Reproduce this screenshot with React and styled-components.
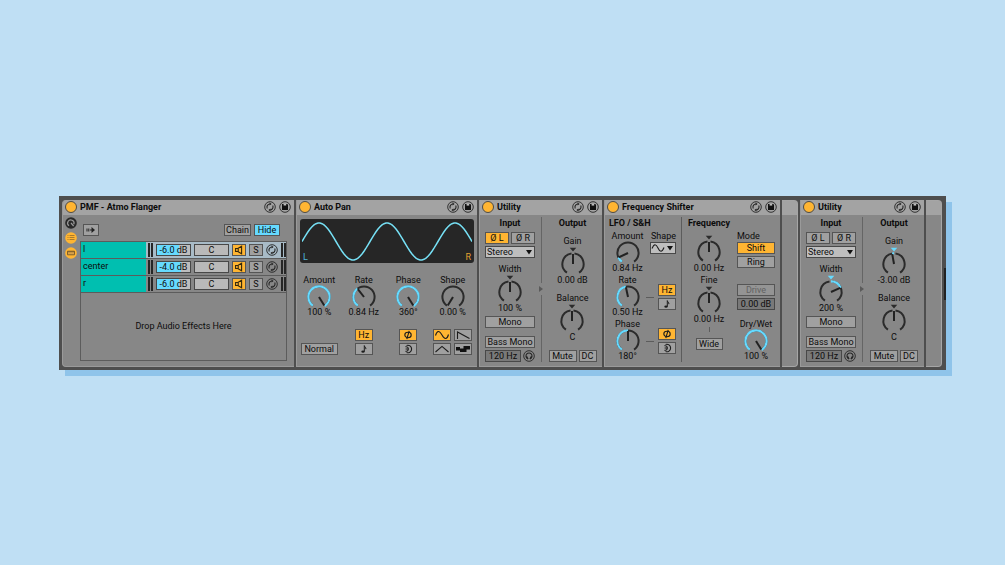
import styled, { createGlobalStyle, css } from "styled-components";

const color = {
    page: '#bfdff4',
    shadow: '#8fc4ea',
    frame: '#4e4e4e',
    title: '#a3a3a3',
    body: '#878787',
    button: '#a0a0a0',
    field: '#797979',
    line: '#5c5c5c',
    ink: '#0c0c0c',
    orange: '#ffb532',
    blue: '#66daff',
    teal: '#00bfb0',
    display: '#262626',
}

const GlobalStyle = createGlobalStyle`
    * { box-sizing: border-box; }
    body {
        margin: 0;
        background: ${color.page};
    }
    body, button, input, select {
        font-family: Roboto, "Liberation Sans", sans-serif;
        font-size: 9px;
        font-weight: 400;
        line-height: 12px;
        color: ${color.ink};
    }
`

const Page = styled.main`
    min-height: 100vh;
    padding: 0 59px;
    display: flex;
    align-items: center;
`
const Rack = styled.div`
    position: relative;
    flex: 1;
    display: grid;
    grid-template-columns:
        minmax(0, 232fr) minmax(0, 181fr) minmax(0, 123fr) minmax(0, 176fr)
        minmax(0, 16fr) minmax(0, 124fr) minmax(0, 16fr);
    gap: 2px;
    padding: 4px 4px 3px 3px;
    background: ${color.frame};
    box-shadow: 6px 6px 0 ${color.shadow};
    &::after {
        content: '';
        position: absolute;
        right: 0;
        top: 72px;
        width: 2px;
        height: 32px;
        background: #222;
    }
`

// device shell
const DeviceBox = styled.section`
    display: flex;
    flex-direction: column;
    background: ${color.body};
    border: 1px solid #9a9a9a;
    border-top: 0;
    border-right: 0;
    border-radius: ${props => props.$first ? '4px 0 0 4px' : '0'};
    overflow: hidden;
`
const TitleBar = styled.header`
    display: flex;
    align-items: center;
    gap: 3px;
    height: 15px;
    padding: 0 3px 0 2px;
    background: ${color.title};
    h2 {
        flex-grow: 1;
        margin: 0;
        font-size: 9px;
        line-height: 12px;
        font-weight: 700;
        white-space: nowrap;
    }
`
const RackEnd = styled.div`
    border: 1px solid #a6a6a6;
    border-left: 0;
    border-radius: 0 4px 4px 0;
    background: linear-gradient(${color.title} 14px, ${color.body} 14px);
`
const Round = styled.button`
    flex: none;
    width: 12px;
    height: 12px;
    padding: 0;
    border: 0;
    border-radius: 50%;
    background: none;
    svg { display: block; }
`
const Power = styled(Round)`
    border: 1px solid #4a4a4a;
    background: ${color.orange};
`

// shared controls
const Button = styled.button`
    display: flex;
    align-items: center;
    justify-content: center;
    width: ${props => props.$width ? props.$width + 'px' : 'auto'};
    height: 12px;
    padding: 0;
    border: 1px solid #555;
    border-radius: 0;
    background: ${color.button};
    line-height: 10px;
    white-space: nowrap;
    ${props => props.$on && css`background: ${color.orange};`}
    ${props => props.$blue && css`background: ${color.blue};`}
    &:disabled {
        color: #626262;
        background: #949494;
    }
`
const Field = styled.input`
    width: ${props => props.$width ? props.$width + 'px' : '100%'};
    min-width: 0;
    height: 12px;
    padding: 0;
    border: 1px solid #484848;
    border-radius: 0;
    text-align: center;
    line-height: 10px;
    background: ${color.field};
    ${props => props.$fill && css`
        background: linear-gradient(90deg, ${color.blue} ${props.$fill}%, #bdbdbd ${props.$fill}%);
    `}
    ${props => props.$light && css`background: #b9b9b9;`}
`
const SelectBox = styled.div`
    position: relative;
    width: ${props => props.$width}px;
    height: 12px;
    select {
        display: block;
        appearance: none;
        width: 100%;
        height: 12px;
        padding: 0 0 0 1px;
        border: 1px solid #484848;
        border-radius: 0;
        background: #bebebe;
        line-height: 10px;
        color: ${props => props.$drawn ? 'transparent' : color.ink};
    }
    svg {
        position: absolute;
        top: 0;
        right: 2px;
        pointer-events: none;
    }
`
const Heading = styled.h3`
    margin: 0;
    font-size: 9px;
    line-height: 12px;
    font-weight: 700;
    white-space: nowrap;
`
const Text = styled.span`
    line-height: 12px;
    white-space: nowrap;
`
const Row = styled.div`
    display: flex;
    align-items: center;
    gap: ${props => props.$gap || 0}px;
`
const KnobLabel = styled.label`
    position: relative;
    display: flex;
    flex-direction: column;
    align-items: center;
    white-space: nowrap;
    svg {
        display: block;
        overflow: visible;
    }
    input {
        position: absolute;
        inset: 12px 0;
        width: 100%;
        margin: 0;
        opacity: 0;
    }
`

const at = (deg, r) => {
    const a = deg * Math.PI / 180
    return `${(13 + r * Math.sin(a)).toFixed(2)} ${(-r * Math.cos(a)).toFixed(2)}`
}
const arc = (from, to, r) =>
    `M${at(from, r)}A${r} ${r} 0 ${to - from > 180 ? 1 : 0} 1 ${at(to, r)}`

// angle 0 points up, the travel is -145 to 145
const Knob = ({ label, name, value, angle, from, marker, markerOn }) => {
    const height = marker ? 27 : 20
    const cy = marker ? 17 : 11
    const lit = from !== undefined && from !== angle
    const lo = lit ? Math.min(from, angle) : 0
    const hi = lit ? Math.max(from, angle) : 0
    return (
        <KnobLabel>
            {label && <span>{label}</span>}
            <svg width="26" height={height} viewBox={`0 ${-cy} 26 ${height}`} fill="none" strokeWidth="2">
                {marker && <path d="M9.700 -16.2h6.600l-3.300 3.6z" fill={markerOn ? color.blue : '#2b2b2b'} />}
                <path d={marker ? arc(-145, -8, 10.6) + arc(8, 145, 10.6) : arc(-145, 145, 10.6)} stroke="#2b2b2b" />
                {lit && <path d={arc(lo, hi, 10.6)} stroke={color.blue} strokeWidth="2.2" />}
                <path d={`M13 0L${at(angle, 10)}`} stroke="#222" strokeWidth="2" />
            </svg>
            <span>{value}</span>
            <input type="range" min="-145" max="145" defaultValue={angle} aria-label={name || label} />
        </KnobLabel>
    )
}

// icons
const SwapIcon = () => (
    <svg width="12" height="12" viewBox="0 0 12 12" fill="none" stroke="#262626">
        <circle cx="6" cy="6" r="5.3" strokeWidth=".9" />
        <path d="M3.3 7.4A3 3 0 0 1 6.2 3M8.7 4.6A3 3 0 0 1 5.8 9" strokeWidth="1.1" />
        <path d="M5.6 1.6L7.6 3.1 5.6 4.6zM6.4 7.4L4.4 8.9 6.4 10.4z" fill="#262626" stroke="none" />
    </svg>
)
const SaveIcon = () => (
    <svg width="12" height="12" viewBox="0 0 12 12">
        <circle cx="6" cy="6" r="5.3" fill="none" stroke="#262626" strokeWidth=".9" />
        <path d="M3 3h5.2L9 3.8V9H3z" fill="#111" />
        <path d="M4.6 3h2.6v1.6H4.6z" fill="#bbb" />
    </svg>
)
const PhaseIcon = () => (
    <svg width="12" height="10" viewBox="0 0 12 10" fill="none" stroke="#1c1c1c" strokeWidth="1.1">
        <ellipse cx="6" cy="5" rx="3.2" ry="2.7" />
        <path d="M7.2 .8L4.8 9.2" />
    </svg>
)
const SpinIcon = () => (
    <svg width="12" height="10" viewBox="0 0 12 10" fill="none" stroke="#1c1c1c" strokeWidth="1.1">
        <path d="M4.6 1.4A3.800 3.800 0 1 1 4.6 8.6" />
        <path d="M3.4 2.800a2.300 2.300 0 1 1 0 4.400M3.600 5h2.400" />
    </svg>
)
const NoteIcon = () => (
    <svg width="8" height="10" viewBox="0 0 8 10" fill="none">
        <ellipse cx="3" cy="7.6" rx="1.7" ry="1.2" fill="#1c1c1c" />
        <path d="M4.3 7.6V1.6c.3 1.6 2 1.6 1.5 3.6" stroke="#1c1c1c" />
    </svg>
)
const waves = {
    sine: 'M1.5 5.5C3 .2 5.4 .2 8 5S13 9.8 14.5 4.5',
    saw: 'M2.5 9V2L14.5 8.4',
    triangle: 'M1.5 8L8 2.4 14.5 8',
}
const WaveIcon = ({ shape }) => (
    <svg width="16" height="10" viewBox="0 0 16 10" fill="none" stroke="#1c1c1c" strokeWidth="1.1">
        {shape === 'random'
            ? <path d="M1 3h4v1.500h3.500V2H15v3.500h-3.500V8H5V6.500H1z" fill="#111" stroke="none" />
            : <path d={waves[shape]} />}
    </svg>
)
const HeadphoneIcon = () => (
    <svg width="12" height="12" viewBox="0 0 12 12" fill="none" stroke="#262626">
        <circle cx="6" cy="6" r="5.3" strokeWidth=".9" />
        <path d="M4.2 8.4A3 3 0 1 1 7.8 8.4" strokeWidth="1.1" />
        <path d="M3.4 6.4l1.5 2.8M8.6 6.4L7.1 9.2" strokeWidth="1.5" />
    </svg>
)
const SpeakerIcon = () => (
    <svg width="10" height="10" viewBox="0 0 10 10" fill="none" stroke="#33260a" strokeWidth="1.1">
        <path d="M1.6 3.5h2.2L7.6 1.2v7.6L3.8 6.5H1.6zM4.2 3.5v3" />
    </svg>
)
const DownArrow = () => (
    <svg width="8" height="12" viewBox="0 0 8 12"><path d="M1 4h6L4 8.5z" fill="#111" /></svg>
)

const Device = ({ name, first, children }) => (
    <DeviceBox $first={first}>
        <TitleBar>
            <Power aria-label={`${name} on`} />
            <h2>{name}</h2>
            <Round aria-label="Hot swap"><SwapIcon /></Round>
            <Round aria-label="Save preset"><SaveIcon /></Round>
        </TitleBar>
        {children}
    </DeviceBox>
)

// chain rack
const ChainBody = styled.div`
    flex: 1;
    display: grid;
    grid-template-columns: 12px minmax(0, 1fr);
    gap: 3px;
    padding: 2px 7px 5px 2px;
`
const SideTabs = styled.div`
    display: flex;
    flex-direction: column;
    gap: 3px;
`
const ChainArea = styled.div`
    display: flex;
    flex-direction: column;
`
const ChainTools = styled.div`
    display: flex;
    gap: 3px;
    padding: 7px 7px 5px 3px;
    button:first-child { margin-right: auto; }
`
const ChainList = styled.div`
    flex: 1;
    display: flex;
    flex-direction: column;
    border: 1px solid ${color.line};
`
const ChainRow = styled.div`
    display: grid;
    grid-template-columns: minmax(0, 1fr) 5px 35px 35px 14px 14px 12px 5px;
    column-gap: 3px;
    align-items: center;
    height: 17px;
    border-bottom: 1px solid ${color.line};
    background: ${props => props.$selected ? '#a8bbc7' : color.body};
    > span:first-child {
        height: 16px;
        margin-right: -1px;
        padding-left: 2px;
        line-height: 15px;
        background: ${color.teal};
    }
`
const Meter = styled.span`
    height: 14px;
    border: solid #262626;
    border-width: 0 2px;
`
const DropZone = styled.div`
    flex: 1;
    display: flex;
    align-items: center;
    justify-content: center;
`

const chains = [
    { name: 'l', volume: '-6.0 dB', fill: 68, selected: true },
    { name: 'center', volume: '-4.0 dB', fill: 72 },
    { name: 'r', volume: '-6.0 dB', fill: 68 },
]

const ChainRack = () => (
    <Device name="PMF - Atmo Flanger" first>
        <ChainBody>
            <SideTabs>
                <Round aria-label="Macros">
                    <svg width="12" height="12" viewBox="0 0 12 12" fill="none">
                        <circle cx="6" cy="6" r="5.8" fill="#292929" />
                        <path d="M4 8.8A3.2 3.2 0 1 1 8.8 7.3M6 6l2.6 3" stroke="#999" strokeWidth="1.2" />
                    </svg>
                </Round>
                <Round aria-label="Chain list">
                    <svg width="12" height="12" viewBox="0 0 12 12">
                        <circle cx="6" cy="6" r="5.8" fill={color.orange} />
                        <path d="M2.5 3.5h1M4.5 3.5h5M2.5 5.5h1M4.5 5.5h5M2.5 7.5h1M4.5 7.5h5" stroke="#a97b2b" />
                    </svg>
                </Round>
                <Round aria-label="Devices">
                    <svg width="12" height="12" viewBox="0 0 12 12">
                        <circle cx="6" cy="6" r="5.8" fill={color.orange} />
                        <path d="M2.5 4.2h7v3.6h-7z" fill="#d8a24a" stroke="#80612b" />
                        <path d="M2.5 4.7h7" stroke="#80612b" />
                    </svg>
                </Round>
            </SideTabs>
            <ChainArea>
                <ChainTools>
                    <Button $width={16} aria-label="Auto select">
                        <svg width="10" height="8" viewBox="0 0 10 8">
                            <path d="M1 2.5v3M2.8 2.5v3M4 4h2" stroke="#222" />
                            <path d="M5.5 1L9 4 5.5 7z" fill="#222" />
                        </svg>
                    </Button>
                    <Button $width={27}>Chain</Button>
                    <Button $width={26} $blue>Hide</Button>
                </ChainTools>
                <ChainList>
                    {chains.map(chain => (
                        <ChainRow key={chain.name} $selected={chain.selected}>
                            <span>{chain.name}</span>
                            <Meter />
                            <Field $fill={chain.fill} defaultValue={chain.volume} aria-label={`${chain.name} volume`} />
                            <Field $light defaultValue="C" aria-label={`${chain.name} pan`} />
                            <Button $on aria-label={`${chain.name} active`}><SpeakerIcon /></Button>
                            <Button>S</Button>
                            <Round aria-label="Hot swap"><SwapIcon /></Round>
                            <Meter />
                        </ChainRow>
                    ))}
                    <DropZone>Drop Audio Effects Here</DropZone>
                </ChainList>
            </ChainArea>
        </ChainBody>
    </Device>
)

// auto pan
const PanBody = styled.div`
    padding: 4px 3px 0 3px;
`
const Display = styled.div`
    position: relative;
    height: 44px;
    padding: 0 2px;
    border-radius: 3px;
    background: ${color.display};
    svg {
        display: block;
        width: 100%;
        height: 44px;
    }
`
const Channel = styled.span`
    position: absolute;
    bottom: 0;
    ${props => props.$right ? 'right: 3px;' : 'left: 3px;'}
    color: ${props => props.$right ? '#e0a030' : '#4fb4d8'};
`
const FourColumns = styled.div`
    display: grid;
    grid-template-columns: repeat(4, minmax(0, 1fr));
    justify-items: center;
    align-items: end;
    margin: ${props => props.$top}px -1px 0 -3px;
`
const Pair = styled.div`
    display: grid;
    grid-template-columns: repeat(${props => props.$columns || 1}, 18px);
    gap: 2px 3px;
`

const sine = () => {
    const points = []
    for (let x = 0; x <= 170; x += 2) {
        points.push(`${x} ${(22.5 - 18.5 * Math.sin(x / 170 * 5 * Math.PI)).toFixed(2)}`)
    }
    return 'M' + points.join('L')
}

const AutoPan = () => (
    <Device name="Auto Pan">
        <PanBody>
            <Display>
                <svg viewBox="0 0 170 44" preserveAspectRatio="none" fill="none">
                    <path d={sine()} stroke="#76e0f5" strokeWidth="1.5" />
                </svg>
                <Channel>L</Channel>
                <Channel $right>R</Channel>
            </Display>
            <FourColumns $top={11}>
                <Knob label="Amount" value="100 %" angle={148} from={-145} />
                <Knob label="Rate" value="0.84 Hz" angle={-38} from={-145} />
                <Knob label="Phase" value="360°" angle={148} from={-145} />
                <Knob label="Shape" value="0.00 %" angle={-148} />
            </FourColumns>
            <FourColumns $top={11}>
                <Button $width={37}>Normal</Button>
                <Pair>
                    <Button $on>Hz</Button>
                    <Button aria-label="Sync"><NoteIcon /></Button>
                </Pair>
                <Pair>
                    <Button $on aria-label="Phase"><PhaseIcon /></Button>
                    <Button aria-label="Spin"><SpinIcon /></Button>
                </Pair>
                <Pair $columns={2}>
                    <Button $on aria-label="Sine"><WaveIcon shape="sine" /></Button>
                    <Button aria-label="Saw"><WaveIcon shape="saw" /></Button>
                    <Button aria-label="Triangle"><WaveIcon shape="triangle" /></Button>
                    <Button aria-label="Random"><WaveIcon shape="random" /></Button>
                </Pair>
            </FourColumns>
        </PanBody>
    </Device>
)

// utility
const UtilityBody = styled.div`
    flex: 1;
    display: grid;
    grid-template-columns: 50px 4px minmax(0, 1fr);
    column-gap: 4px;
    padding: 2px 4px 4px 5px;
`
const Column = styled.div`
    display: flex;
    flex-direction: column;
    align-items: ${props => props.$align || 'center'};
`
const Space = styled.div`
    flex: none;
    height: ${props => props.$size}px;
`
const Divider = styled.div`
    display: flex;
    flex-direction: column;
    align-items: center;
    &::before, &::after {
        content: '';
        flex: 1;
        width: 1px;
        background: #656565;
    }
    svg { margin: 3px 0; }
`

const Utility = ({ leftInverted, width, widthAngle, gain, gainAngle }) => (
    <Device name="Utility">
        <UtilityBody>
            <Column>
                <Heading>Input</Heading>
                <Space $size={3} />
                <Row $gap={2}>
                    <Button $width={24} $on={leftInverted}>Ø L</Button>
                    <Button $width={24}>Ø R</Button>
                </Row>
                <Space $size={2} />
                <SelectBox $width={50}>
                    <select aria-label="Channel mode"><option>Stereo</option></select>
                    <DownArrow />
                </SelectBox>
                <Space $size={5} />
                <Knob label="Width" value={width} angle={widthAngle} from={0} marker markerOn={widthAngle !== 0} />
                <Space $size={2} />
                <Button $width={50}>Mono</Button>
                <Space $size={8} />
                <Button $width={50}>Bass Mono</Button>
                <Space $size={2} />
                <Row $gap={2}>
                    <Field $width={36} defaultValue="120 Hz" aria-label="Bass mono frequency" />
                    <Round aria-label="Audition"><HeadphoneIcon /></Round>
                </Row>
            </Column>
            <Divider>
                <svg width="4" height="6" viewBox="0 0 4 6"><path d="M0 0l4 3-4 3z" fill="#5a5a5a" /></svg>
            </Divider>
            <Column>
                <Heading>Output</Heading>
                <Space $size={6} />
                <Knob label="Gain" value={gain} angle={gainAngle} from={0} marker markerOn={gainAngle !== 0} />
                <Space $size={6} />
                <Knob label="Balance" value="C" angle={0} marker />
                <Space $size={7} />
                <Row $gap={2}>
                    <Button $width={28}>Mute</Button>
                    <Button $width={18}>DC</Button>
                </Row>
            </Column>
        </UtilityBody>
    </Device>
)

// frequency shifter
const ShifterBody = styled.div`
    flex: 1;
    display: grid;
    grid-template-columns: 69px 1px 48px minmax(0, 1fr);
    column-gap: 3px;
    padding: 2px 5px 4px 4px;
`
const LfoGrid = styled.div`
    display: grid;
    grid-template-columns: 37px 30px;
    margin-top: 1px;
`
const Linked = styled.div`
    display: flex;
    align-items: center;
    justify-content: flex-end;
    gap: 4px;
    padding-top: 3px;
    &::before {
        content: '';
        width: 9px;
        height: 1px;
        background: ${color.line};
    }
`
const VLine = styled.div`
    height: ${props => props.$height ? props.$height + 'px' : 'auto'};
    width: 1px;
    background: ${color.line};
`

const FrequencyShifter = () => (
    <Device name="Frequency Shifter">
        <ShifterBody>
            <Column $align="stretch">
                <Heading>LFO / S&amp;H</Heading>
                <LfoGrid>
                    <Knob label="Amount" value="0.84 Hz" angle={-115} from={-145} />
                    <Column $align="flex-end">
                        <Text>Shape</Text>
                        <SelectBox $width={26} $drawn>
                            <select aria-label="LFO shape"><option aria-label="Sine"></option></select>
                            <svg width="24" height="12" viewBox="0 0 24 12" fill="none">
                                <path d="M2 6.5C4 1.5 6 1.5 8 6s4 4.500 6-.5" stroke="#1c1c1c" strokeWidth="1.1" />
                                <path d="M17 4h6l-3 4.500z" fill="#111" />
                            </svg>
                        </SelectBox>
                    </Column>
                    <Knob label="Rate" value="0.50 Hz" angle={-12} from={-145} />
                    <Linked>
                        <Pair>
                            <Button $on>Hz</Button>
                            <Button aria-label="Sync"><NoteIcon /></Button>
                        </Pair>
                    </Linked>
                    <Knob label="Phase" value="180°" angle={0} from={-145} />
                    <Linked>
                        <Pair>
                            <Button $on aria-label="Phase"><PhaseIcon /></Button>
                            <Button aria-label="Spin"><SpinIcon /></Button>
                        </Pair>
                    </Linked>
                </LfoGrid>
            </Column>
            <VLine />
            <Column>
                <Heading>Frequency</Heading>
                <Space $size={6} />
                <Knob name="Frequency" value="0.00 Hz" angle={0} marker />
                <Knob label="Fine" value="0.00 Hz" angle={0} marker />
                <Space $size={2} />
                <VLine $height={5} />
                <Space $size={6} />
                <Button $width={27}>Wide</Button>
            </Column>
            <Column $align="flex-end">
                <Space $size={13} />
                <Column $align="stretch">
                    <Text>Mode</Text>
                    <Button $width={38} $on>Shift</Button>
                    <Space $size={2} />
                    <Button $width={38}>Ring</Button>
                    <Space $size={16} />
                    <Button $width={38} disabled>Drive</Button>
                    <Space $size={2} />
                    <Field $width={38} defaultValue="0.00 dB" aria-label="Drive amount" />
                    <Space $size={8} />
                    <Knob label="Dry/Wet" value="100 %" angle={148} from={-145} />
                </Column>
            </Column>
        </ShifterBody>
    </Device>
)

export default function App() {
    return (
        <>
            <GlobalStyle />
            <Page>
                <Rack>
                    <ChainRack />
                    <AutoPan />
                    <Utility leftInverted width="100 %" widthAngle={0} gain="0.00 dB" gainAngle={0} />
                    <FrequencyShifter />
                    <RackEnd />
                    <Utility width="200 %" widthAngle={66} gain="-3.00 dB" gainAngle={-10} />
                    <RackEnd />
                </Rack>
            </Page>
        </>
    )
}
